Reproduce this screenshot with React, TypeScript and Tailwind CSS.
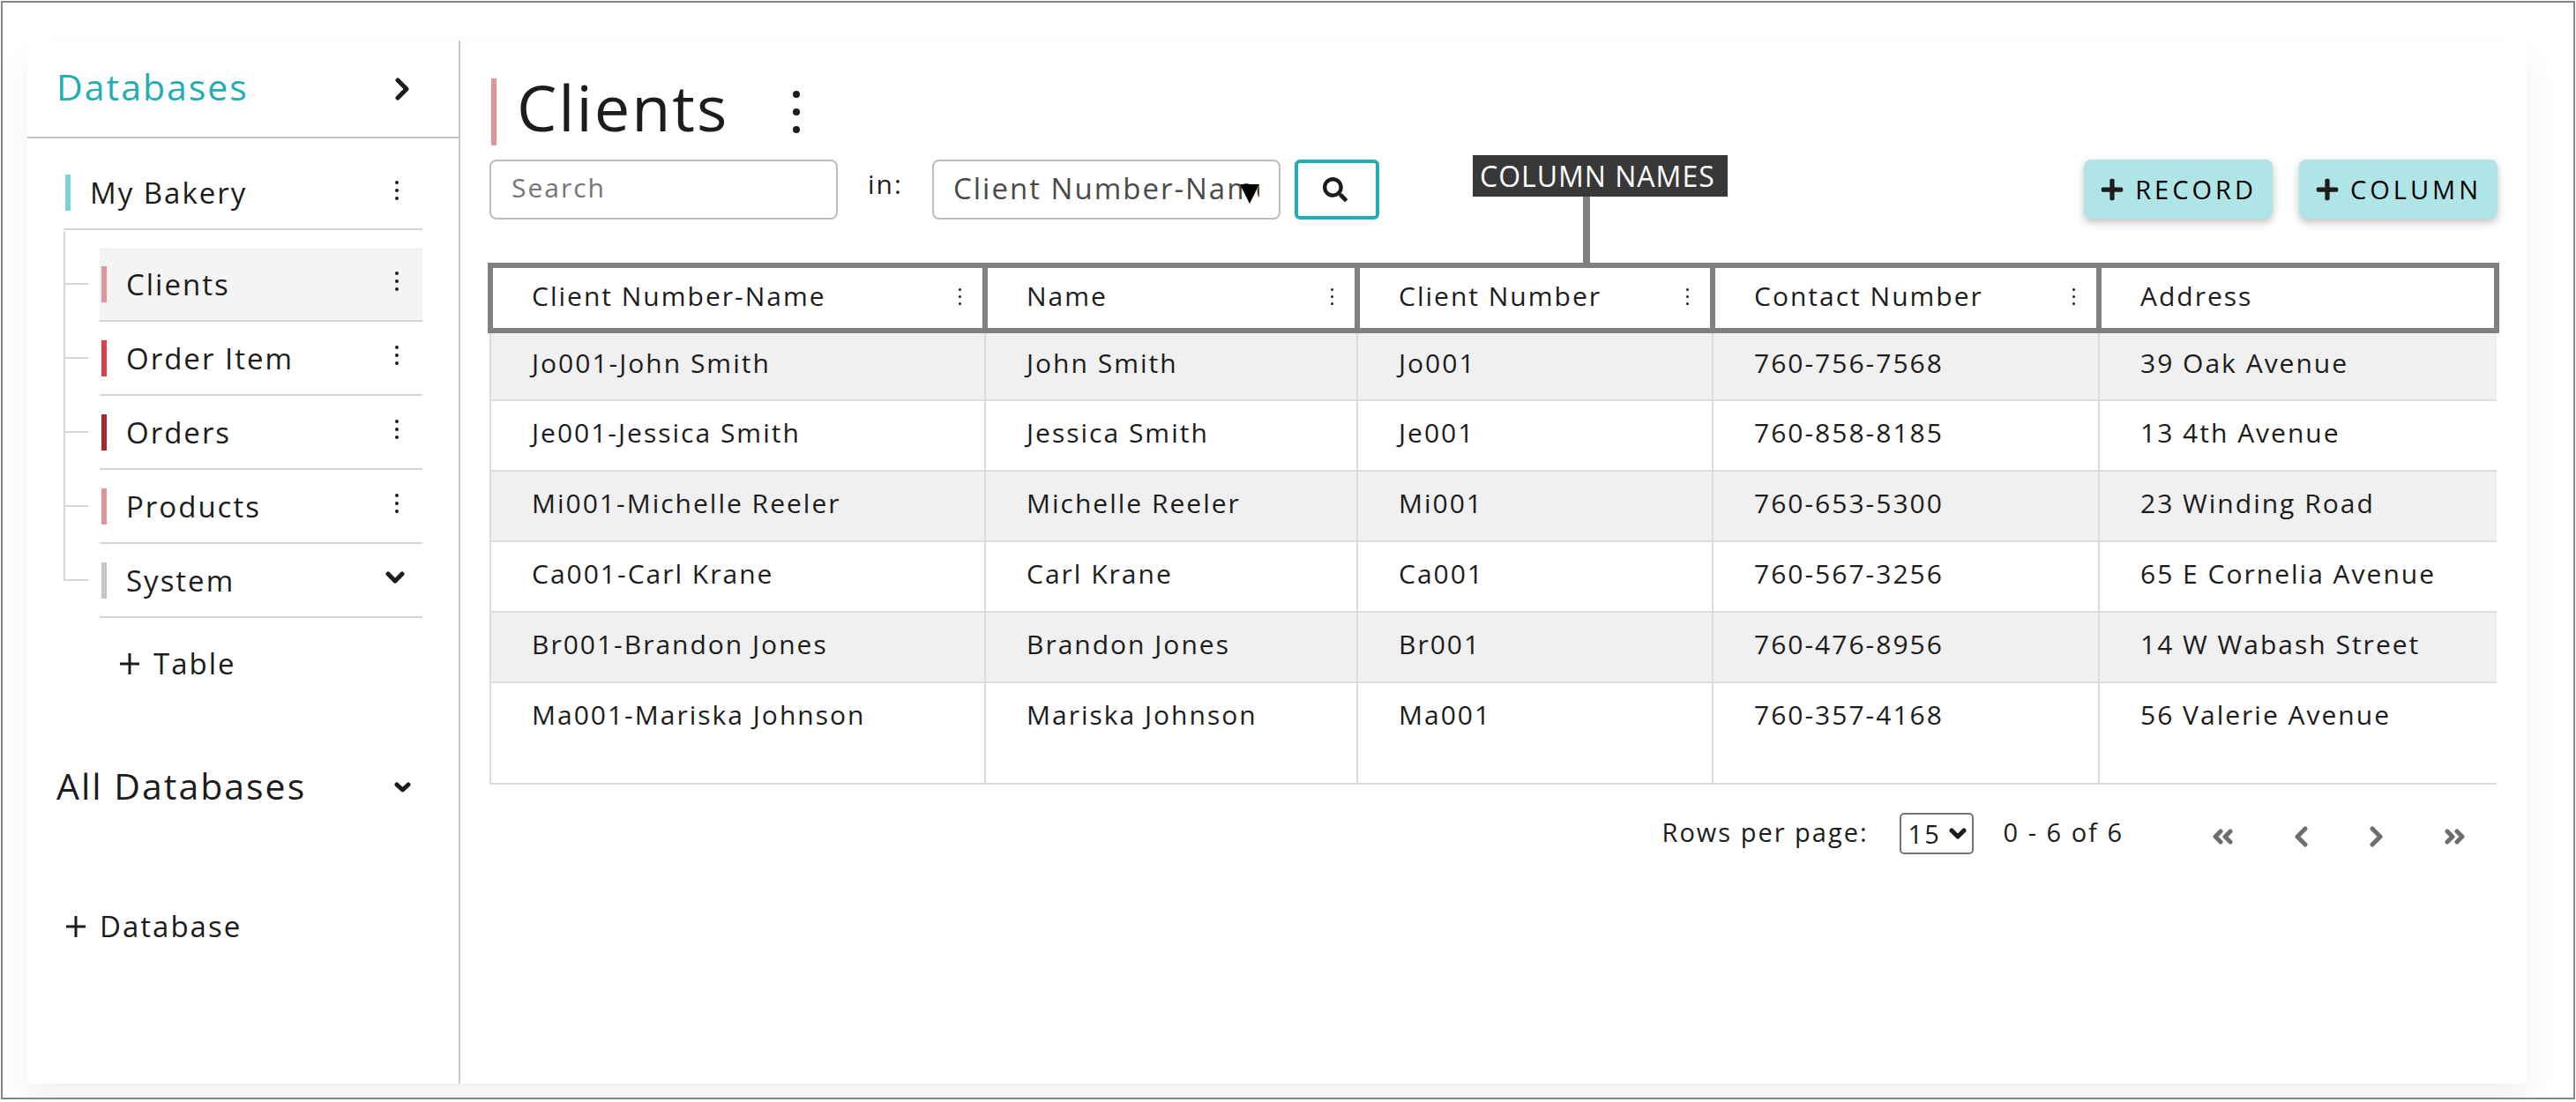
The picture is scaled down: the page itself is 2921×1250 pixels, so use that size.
import { FaPlus, FaSearch } from "react-icons/fa";

function Chevron({ w, h, points, stroke = 5 }: { w: number; h: number; points: string[]; stroke?: number }) {
  return (
    <svg width={w} height={h} viewBox={`0 0 ${w} ${h}`} fill="none" stroke="currentColor" strokeWidth={stroke} strokeLinecap="round" strokeLinejoin="round" aria-hidden="true">
      {points.map((p) => (
        <polyline key={p} points={p} />
      ))}
    </svg>
  );
}

function Dots({ size, pitch }: { size: number; pitch: number }) {
  const h = pitch * 2 + size;
  return (
    <svg width={size} height={h} viewBox={`0 0 ${size} ${h}`} fill="currentColor" aria-hidden="true">
      {[0, 1, 2].map((i) => (
        <circle key={i} cx={size / 2} cy={size / 2 + pitch * i} r={size / 2} />
      ))}
    </svg>
  );
}

function ThinPlus() {
  return (
    <svg width="22" height="24" viewBox="0 0 22 24" stroke="currentColor" strokeWidth="3" aria-hidden="true">
      <path d="M11 0V24M0 12H22" />
    </svg>
  );
}

const tables = [
  { name: "Clients", bar: "bg-[#de959b]", active: true },
  { name: "Order Item", bar: "bg-[#d94045]" },
  { name: "Orders", bar: "bg-[#a9262e]" },
  { name: "Products", bar: "bg-[#de959b]" },
  { name: "System", bar: "bg-[#c6c6c6]", folder: true },
];

const columns = ["Client Number-Name", "Name", "Client Number", "Contact Number", "Address"];

const rows = [
  ["Jo001-John Smith", "John Smith", "Jo001", "760-756-7568", "39 Oak Avenue"],
  ["Je001-Jessica Smith", "Jessica Smith", "Je001", "760-858-8185", "13 4th Avenue"],
  ["Mi001-Michelle Reeler", "Michelle Reeler", "Mi001", "760-653-5300", "23 Winding Road"],
  ["Ca001-Carl Krane", "Carl Krane", "Ca001", "760-567-3256", "65 E Cornelia Avenue"],
  ["Br001-Brandon Jones", "Brandon Jones", "Br001", "760-476-8956", "14 W Wabash Street"],
  ["Ma001-Mariska Johnson", "Mariska Johnson", "Ma001", "760-357-4168", "56 Valerie Avenue"],
];

function Sidebar() {
  return (
    <aside className="w-[491px] shrink-0 border-r-2 border-[#c8c8c8]">
      <div className="flex h-[111px] items-center justify-between border-b-2 border-[#c4c4c4] pr-[56px] pl-[33px]">
        <h2 className="pb-1.5 text-[41px] leading-[52px] tracking-[2px] text-[#22adb5]">Databases</h2>
        <button aria-label="Collapse sidebar">
          <Chevron w={16} h={26} points={["3,3 13,13 3,23"]} />
        </button>
      </div>

      <nav className="pr-[41px] pl-[41px]">
        <div className="mt-[20px] flex h-[84px] items-center border-b-2 border-[#d6d6d6] pr-[27px] pl-0.5">
          <span className="h-[41px] w-1.5 bg-[#7ad4d4]" />
          <a href="#my-bakery" className="ml-[22px] grow pt-0.5">My Bakery</a>
          <button aria-label="My Bakery options" className="pb-1"><Dots size={4} pitch={9} /></button>
        </div>

        <ul className="mt-0.5">
          <li aria-hidden="true" className="h-[18px] border-l-2 border-[#d6d6d6]" />
          {tables.map((t) => (
            <li key={t.name} className="flex h-[84px]">
              <span aria-hidden="true" className="mr-[13px] flex w-7 flex-col">
                <span className="h-[42px] border-b-2 border-l-2 border-[#d6d6d6]" />
                {!t.folder && <span className="grow border-l-2 border-[#d6d6d6]" />}
              </span>
              <div className={`flex grow items-center border-b-2 border-[#d6d6d6] pl-0.5 ${t.folder ? "pr-[20px]" : "pr-[27px]"} ${t.active ? "bg-[#f4f4f4]" : ""}`}>
                <span className={`h-[41px] w-1.5 ${t.bar}`} />
                <a href={`#${t.name}`} className={`ml-[22px] grow pt-0.5 ${t.folder ? "font-medium" : ""}`}>{t.name}</a>
                <button aria-label={`${t.name} options`} className="pb-1.5">
                  {t.folder ? <Chevron w={22} h={14} points={["3,3 11,11 19,3"]} /> : <Dots size={4} pitch={9} />}
                </button>
              </div>
            </li>
          ))}
        </ul>

        <button className="mt-[30px] ml-[64px] flex items-center gap-[16px]">
          <ThinPlus />Table
        </button>
      </nav>

      <div className="mt-[90px] flex items-center justify-between pr-[54px] pl-[33px]">
        <h2 className="text-[41px] leading-[52px] tracking-[2px]">All Databases</h2>
        <button aria-label="Expand all databases" className="pt-1">
          <Chevron w={19} h={12} points={["3,3 9.5,9 16,3"]} />
        </button>
      </div>
      <button className="mt-[112px] ml-[44px] flex items-center gap-[16px]">
        <ThinPlus />Database
      </button>
    </aside>
  );
}

function Toolbar() {
  return (
    <div className="mt-4 ml-0.5 flex h-[68px] items-stretch">
      <input
        type="search"
        aria-label="Search"
        placeholder="Search"
        className="w-[395px] appearance-none rounded-lg border-2 border-[#bdbdbd] px-[23px] pb-1 text-[30px] tracking-[2px] outline-none placeholder:text-[#757575]"
      />
      <label htmlFor="search-column" className="mx-[34px] w-[39px] pt-2 text-[30px] leading-[40px] tracking-[2px] whitespace-nowrap">in:</label>
      <div className="relative">
        <select
          id="search-column"
          className="h-full w-[395px] appearance-none rounded-lg border-2 border-[#bdbdbd] px-[22px] pb-0.5 text-[33px] tracking-[2px] text-[#4a4a4a] outline-none"
        >
          {columns.map((c) => (
            <option key={c}>{c}</option>
          ))}
        </select>
        <svg width="22" height="22" viewBox="0 0 22 22" className="pointer-events-none absolute top-7 right-6" aria-hidden="true">
          <path d="M0 0H22L11 22Z" />
        </svg>
      </div>
      <button aria-label="Run search" className="ml-4 flex w-[96px] items-center justify-center rounded-md border-4 border-[#22adb5] pr-1">
        <FaSearch size={28} />
      </button>
      <div className="mr-0.5 ml-auto flex gap-[30px]">
        {["RECORD", "COLUMN"].map((label) => (
          <button
            key={label}
            className="flex h-[67px] items-center gap-3 rounded-lg bg-[#b0e5e7] pr-[18px] pl-[18px] text-[29px] tracking-[4px] text-black shadow-[0_4px_10px_rgba(0,0,0,0.25)]"
          >
            <FaPlus size={28} className="text-[#1c1c1c]" />
            {label}
          </button>
        ))}
      </div>
    </div>
  );
}

function ClientsTable() {
  return (
    <div className="relative mt-[49px]">
      <div className="absolute bottom-full left-[1117px] -mb-0.5">
        <div className="bg-[#383838] py-[3px] pr-[14px] pl-2 text-[32px] leading-[41px] tracking-[1px] whitespace-nowrap text-white">COLUMN NAMES</div>
        <div className="ml-[125px] h-[77px] w-2 bg-[#808080]" />
      </div>
      <table className="w-full table-fixed border-collapse text-left text-[30px] leading-[40px] tracking-[2px]">
        <colgroup>
          <col className="w-[561px]" />
          <col className="w-[422px]" />
          <col className="w-[403px]" />
          <col className="w-[438px]" />
          <col />
        </colgroup>
        <thead>
          <tr className="h-[74px]">
            {columns.map((c, i) => (
              <th key={c} scope="col" className="border-6 border-[#808080] p-0 pt-[12px] pr-[24px] pl-[44px] align-top font-normal">
                <div className="flex items-center justify-between">
                  {c}
                  {i < 4 && <button aria-label={`${c} options`}><Dots size={3} pitch={8} /></button>}
                </div>
              </th>
            ))}
          </tr>
        </thead>
        <tbody>
          {rows.map((r, ri) => (
            <tr key={r[0]} className="h-[80px] odd:bg-[#f0f0f0] first:h-[79px] last:h-[115px]">
              {r.map((v, i) => (
                <td key={i} className={`border-b-2 border-l-2 border-[#dcdcdc] p-0 pl-[46px] align-top ${ri === 0 ? "pt-[14px]" : "pt-4"}`}>{v}</td>
              ))}
            </tr>
          ))}
        </tbody>
      </table>
    </div>
  );
}

function Pagination() {
  return (
    <div className="mt-8 mr-[38px] flex h-[47px] items-center justify-end text-[29px] tracking-[2px]">
      <label htmlFor="rows-per-page" className="pb-1">Rows per page:</label>
      <div className="relative mr-[34px] ml-[35px] h-full">
        <select id="rows-per-page" className="h-full w-[84px] appearance-none rounded-[5px] border-2 border-[#757575] pl-[8px] text-[29px] tracking-[2px] outline-none">
          <option>15</option>
          <option>30</option>
        </select>
        <span className="pointer-events-none absolute top-[17px] right-[8px] flex">
          <Chevron w={20} h={13} stroke={5} points={["3,3 10,10 17,3"]} />
        </span>
      </div>
      <span className="pb-1">0 - 6 of 6</span>
      <div className="ml-[100px] flex items-center pt-1.5 text-[#6e6e6e]">
        <button aria-label="First page" className="mr-[69px]"><Chevron w={24} h={18} points={["10,3 4,9 10,15", "21,3 15,9 21,15"]} /></button>
        <button aria-label="Previous page" className="mr-[70px]"><Chevron w={16} h={24} points={["13,3 4,12 13,21"]} /></button>
        <button aria-label="Next page" className="mr-[69px]"><Chevron w={16} h={24} points={["3,3 12,12 3,21"]} /></button>
        <button aria-label="Last page"><Chevron w={24} h={18} points={["3,3 9,9 3,15", "14,3 20,9 14,15"]} /></button>
      </div>
    </div>
  );
}

export default function App() {
  return (
    <div className="flex min-h-screen bg-white p-px pb-[3px] font-['Open_Sans',sans-serif] text-[33px] leading-[44px] tracking-[2px] text-[#1c1c1c]">
      <div className="flex grow overflow-hidden border-2 border-[#858585] pt-[43px] pr-[53px] pb-4 pl-7">
        <div className="flex grow bg-white shadow-[0_20px_40px_rgba(0,0,0,0.06)]">
          <Sidebar />
          <main className="min-w-0 grow pt-[43px] pr-[31px] pl-[31px]">
            <div className="ml-1 flex h-[76px] items-center">
              <span className="h-full w-1.5 bg-[#de959b]" />
              <h1 className="ml-[23px] pb-3 text-[72px] leading-[76px] tracking-[2px]">Clients</h1>
              <button aria-label="Clients options" className="ml-[73px]"><Dots size={8} pitch={20} /></button>
            </div>
            <Toolbar />
            <ClientsTable />
            <Pagination />
          </main>
        </div>
      </div>
    </div>
  );
}
